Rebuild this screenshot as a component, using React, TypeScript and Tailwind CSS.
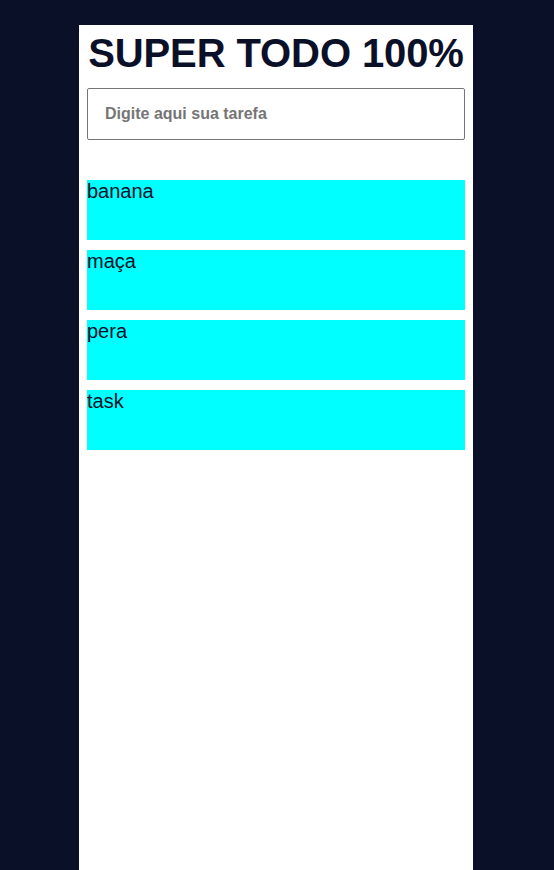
const TASKS = ['banana', 'maça', 'pera', 'task']

export default function App() {
  return (
    <div className="min-h-screen bg-[#0b1029] pr-[2px] pt-[25px] font-['Liberation_Sans',Arial,sans-serif]">
      <main className="mx-auto min-h-[845px] w-[394px] bg-white px-2">
        <h1 className="pt-[5px] text-center text-[40px] font-bold leading-[46px] tracking-[-0.1px] text-[#0b1029]">
          SUPER TODO 100%
        </h1>
        <input
          type="text"
          placeholder="Digite aqui sua tarefa"
          className="mt-[12px] block h-[52px] w-full rounded-[2px] border border-[#767676] px-[17px] text-base font-bold text-[#0b1029] outline-none placeholder:text-[#757575]"
        />
        <ul className="mt-[40px] flex flex-col gap-[10px]">
          {TASKS.map((task) => (
            <li key={task} className="h-[60px] bg-[#00ffff] text-[20px] leading-[23px] text-[#0b1029]">
              {task}
            </li>
          ))}
        </ul>
      </main>
    </div>
  )
}
